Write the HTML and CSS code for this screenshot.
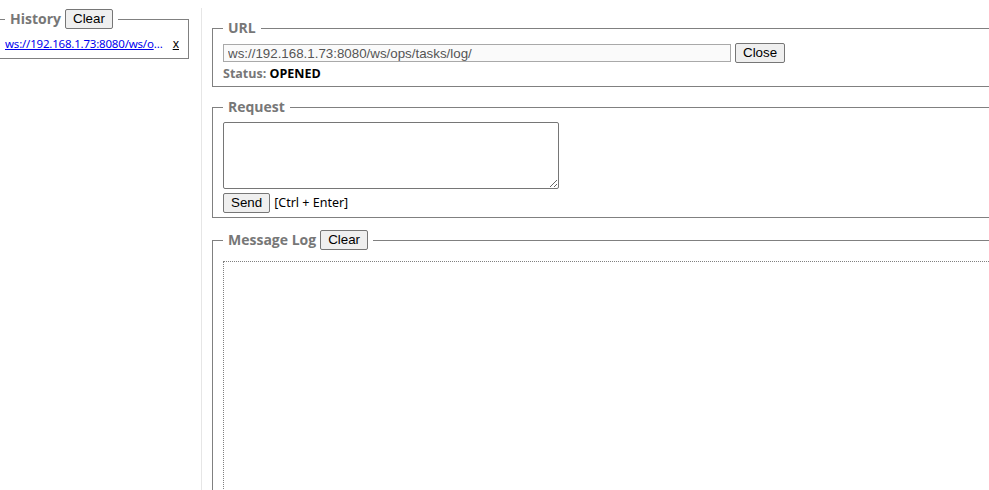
FILE: index.html
```html
<!DOCTYPE html>
<html>
<head>
<meta charset="utf-8">
<title>WebSocket Client</title>
<link rel="stylesheet" href="styles.css">
</head>
<body>
<aside class="sidebar">
  <fieldset class="box history">
    <legend class="legend">History <button class="btn">Clear</button></legend>
    <div class="hist-row">
      <a class="hist-link" href="#">ws://192.168.1.73:8080/ws/ops/tasks/log/</a>
      <a class="hist-del" href="#">x</a>
    </div>
  </fieldset>
</aside>
<main class="main">
  <fieldset class="box url-box">
    <legend class="legend">URL</legend>
    <div class="url-row">
      <input class="url-input" type="text" value="ws://192.168.1.73:8080/ws/ops/tasks/log/">
      <button class="btn">Close</button>
    </div>
    <div class="status"><span class="status-label">Status:</span> <span class="status-val">OPENED</span></div>
  </fieldset>
  <fieldset class="box req-box">
    <legend class="legend">Request</legend>
    <textarea class="req-text"></textarea>
    <div class="send-row">
      <button class="btn">Send</button>
      <span class="hint">[Ctrl + Enter]</span>
    </div>
  </fieldset>
  <fieldset class="box log-box">
    <legend class="legend">Message Log <button class="btn">Clear</button></legend>
    <div class="log"></div>
  </fieldset>
</main>
</body>
</html>
```

FILE: styles.css
```css
html, body {
  margin: 0;
  padding: 0;
  height: 490px;
  overflow: hidden;
  background: #fff;
}
body {
  display: flex;
  align-items: flex-start;
  font-family: "Noto Sans", "Open Sans", sans-serif;
  font-size: 12px;
  color: #000;
}
.sidebar {
  flex: none;
  width: 202px;
  margin-top: 8px;
  height: 482px;
  border-right: 1px solid #e6e6e6;
  box-sizing: border-box;
}
.box {
  border: 1px solid #808080;
  margin: 0;
  min-width: 0;
}
.legend {
  padding: 0 5px;
  font-family: "Open Sans", sans-serif;
  font-weight: bold;
  font-size: 14px;
  line-height: 20px;
  height: 20px;
  color: #777;
  display: flex;
  align-items: center;
  gap: 4px;
}
.btn {
  font-family: "Liberation Sans", Arial, sans-serif;
  font-size: 13.33px;
  font-weight: normal;
  color: #000;
  height: 20px;
  padding: 0 7px;
  border: 1px solid #767676;
  border-radius: 2px;
  background: #efefef;
  line-height: 16px;
  margin: 0;
}
.history {
  margin: 1px 12px 0 -6px;
  padding: 6px 9px 6px 10px;
}
.hist-row {
  display: flex;
  align-items: center;
  gap: 6px;
  height: 17px;
}
.hist-link {
  color: #0000ee;
  width: 160px;
  overflow: hidden;
  white-space: nowrap;
  text-overflow: ellipsis;
  font-size: 11.5px;
  letter-spacing: -0.2px;
}
.hist-del {
  margin-left: auto;
  color: #000;
  font-size: 12px;
}
.main {
  flex: none;
  width: 830px;
  margin-left: 10px;
  padding-top: 18px;
}
.url-box {
  padding: 5px 10px 4px 10px;
}
.url-row {
  display: flex;
  align-items: center;
  gap: 4px;
  height: 20px;
}
.url-input {
  width: 508px;
  height: 18px;
  box-sizing: border-box;
  border: 1px solid #a9a9a9;
  background: #fafafa;
  font-family: "Liberation Sans", Arial, sans-serif;
  font-size: 13.33px;
  color: #555;
  padding: 0 4px;
  margin: 0;
}
.status {
  font-family: "Open Sans", sans-serif;
  font-weight: bold;
  font-size: 12.5px;
  line-height: 17px;
  padding-top: 2px;
}
.status-label { color: #777; }
.status-val { color: #000; }
.req-box {
  margin-top: 10px;
  padding: 5px 10px 4px 10px;
}
.req-text {
  display: block;
  width: 336px;
  height: 67px;
  box-sizing: border-box;
  border: 1px solid #767676;
  border-radius: 2px;
  margin: 0 0 3px 0;
  resize: both;
}
.send-row {
  display: flex;
  align-items: center;
  gap: 4px;
  height: 21px;
}
.hint {
  font-size: 12.5px;
  color: #000;
}
.log-box {
  margin-top: 12px;
  padding: 11px 10px 0 10px;
  height: 300px;
}
.log {
  border: 1px dotted #808080;
  height: 400px;
}
```
